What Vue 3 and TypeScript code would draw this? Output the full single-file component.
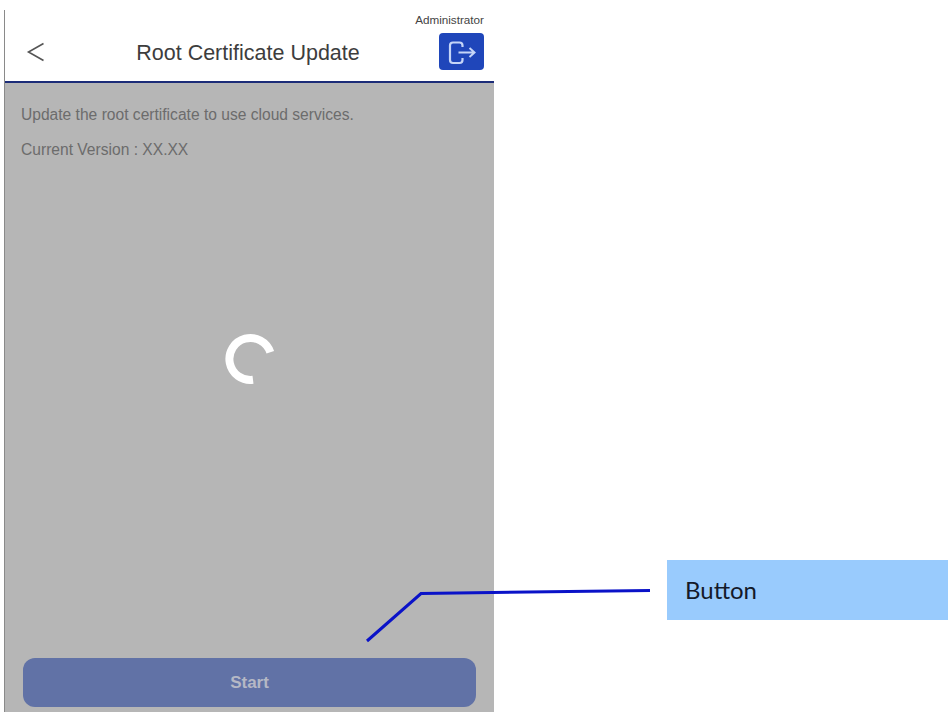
<script setup lang="ts">
const title = 'Root Certificate Update'
</script>

<template>
  <div class="page">
    <section class="phone">
      <header class="bar">
        <svg class="back" viewBox="0 0 20 24" width="20" height="24">
          <path d="M17.5 3.5 L2.5 12 L17.5 20.5" fill="none" stroke="#555" stroke-width="1.6" />
        </svg>
        <h1 class="title">{{ title }}</h1>
        <div class="user">
          <span class="role">Administrator</span>
          <button class="logout" aria-label="Log out">
            <svg viewBox="0 0 30 26" width="30" height="26">
              <path d="M15.5 8 V6.5 Q15.5 3.5 12.5 3.5 H6 Q3 3.5 3 6.5 V21 Q3 24 6 24 H12.5 Q15.5 24 15.5 21 V19" fill="none" stroke="#c5d5f7" stroke-width="2.2" />
              <path d="M11.5 13.5 H27 M22.5 9 L27.5 13.5 L22.5 18" fill="none" stroke="#c5d5f7" stroke-width="2" />
            </svg>
          </button>
        </div>
      </header>
      <main class="body">
        <p class="line first">Update the root certificate to use cloud services.</p>
        <p class="line">Current Version : XX.XX</p>
        <div class="spin-wrap">
          <svg class="spinner" viewBox="0 0 60 60" width="60" height="60">
            <path d="M50.3 23.2 A21 21 0 1 0 33 50.8" fill="none" stroke="#fff" stroke-width="8" />
          </svg>
        </div>
        <button class="start">Start</button>
      </main>
    </section>
    <svg class="leader" viewBox="0 0 951 714" width="951" height="714">
      <path d="M367 641 L421 593.5 L650 590.5" fill="none" stroke="#0a12c8" stroke-width="3" />
    </svg>
    <div class="callout">Button</div>
  </div>
</template>

<style scoped>
.page {
  position: relative;
  width: 951px;
  height: 714px;
  background: #fff;
  overflow: hidden;
  box-sizing: border-box;
  padding: 10px 0 0 4px;
  font-family: "Liberation Sans", Arial, sans-serif;
}
.phone {
  width: 490px;
  height: 702px;
  display: flex;
  flex-direction: column;
  box-sizing: border-box;
  border-left: 1px solid #8a8a8a;
}
.bar {
  height: 73px;
  flex: none;
  display: flex;
  align-items: flex-end;
  box-sizing: border-box;
  padding: 0 10px 11px 21px;
  background: #fff;
  border-bottom: 2px solid #1c2c78;
  position: relative;
}
.back {
  flex: none;
  margin-bottom: 6px;
}
.title {
  flex: 1;
  margin: 0 0 4px;
  padding-left: 38px;
  text-align: center;
  font-size: 21.5px;
  line-height: 26px;
  font-weight: 400;
  color: #3d3d3d;
  white-space: nowrap;
}
.user {
  flex: none;
  width: 72px;
  display: flex;
  flex-direction: column;
  align-items: flex-end;
}
.role {
  font-size: 11.7px;
  line-height: 12px;
  color: #444;
  margin-bottom: 7px;
  white-space: nowrap;
}
.logout {
  width: 45px;
  height: 37px;
  padding: 0;
  border: 0;
  border-radius: 4px;
  background: #1f46ba;
  display: flex;
  align-items: center;
  justify-content: center;
}
.body {
  flex: 1;
  min-height: 0;
  display: flex;
  flex-direction: column;
  box-sizing: border-box;
  padding: 0 18px 5px 18px;
  background: #b6b6b6;
}
.line {
  margin: 0 0 17px;
  font-size: 15.6px;
  line-height: 18px;
  color: #6c6c6c;
  margin-left: -2px;
}
.first {
  margin-top: 23px;
}
.spin-wrap {
  flex: 1;
  display: flex;
  align-items: center;
  justify-content: center;
  padding-bottom: 116px;
}
.spinner {
  flex: none;
}
.start {
  flex: none;
  height: 49px;
  border: 0;
  border-radius: 12px;
  background: #6172a6;
  color: #b5b8c5;
  font-family: inherit;
  font-size: 17px;
  font-weight: 700;
}
.leader {
  position: absolute;
  left: 0;
  top: 0;
  pointer-events: none;
}
.callout {
  position: absolute;
  left: 667px;
  top: 560px;
  width: 281px;
  height: 60px;
  box-sizing: border-box;
  padding: 0 0 2px 18px;
  display: flex;
  align-items: center;
  background: #99cbfd;
  color: #141a2a;
  font-family: Lato, "Liberation Sans", sans-serif;
  font-size: 24px;
}
</style>
